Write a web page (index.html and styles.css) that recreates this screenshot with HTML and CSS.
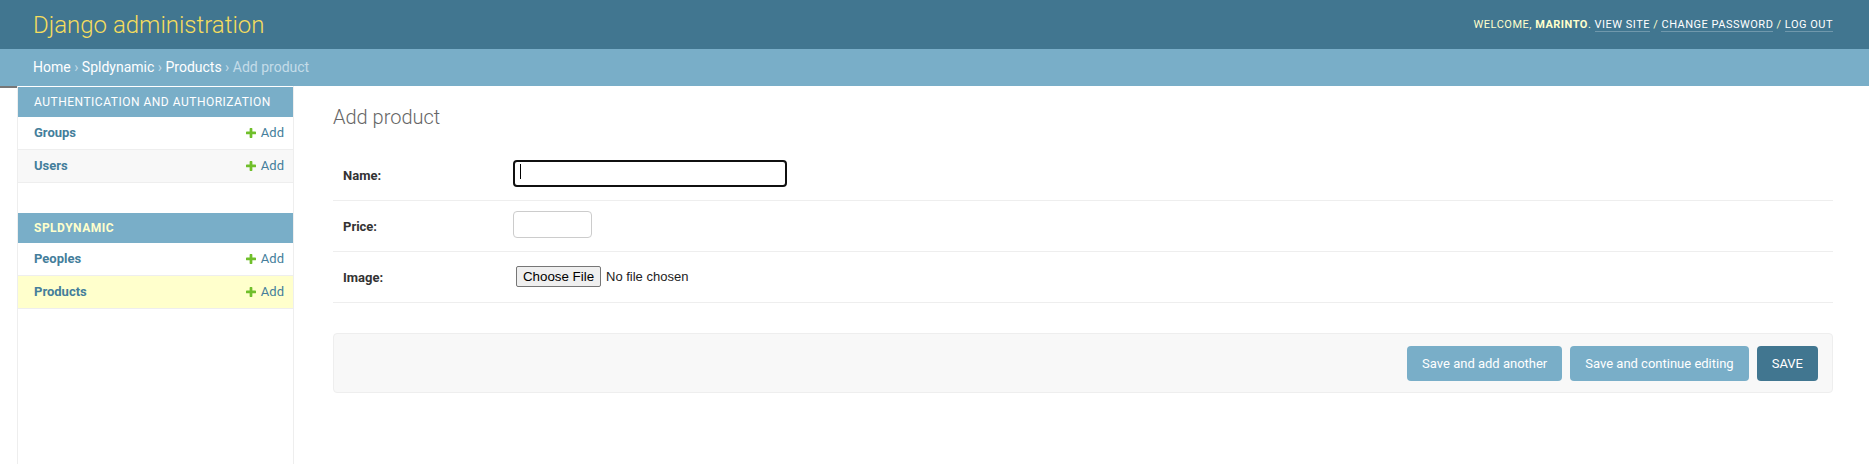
FILE: index.html
```html
<!DOCTYPE html>
<html lang="en">
<head>
<meta charset="utf-8">
<title>Add product | Django site admin</title>
<link rel="stylesheet" href="styles.css">
</head>
<body>
<header class="header">
  <div class="branding"><h1 class="site-name"><a href="#">Django administration</a></h1></div>
  <div class="user-tools">Welcome, <strong>marinto</strong>. <a href="#">View site</a> / <a href="#">Change password</a> / <a href="#">Log out</a></div>
</header>
<nav class="breadcrumbs"><a href="#">Home</a> › <a href="#">Spldynamic</a> › <a href="#">Products</a> › Add product</nav>
<div class="main">
  <button class="toggle-nav" type="button" aria-label="Toggle navigation"></button>
  <nav class="sidebar">
    <div class="module">
      <div class="caption">Authentication and Authorization</div>
      <div class="row"><a class="model" href="#">Groups</a><a class="addlink" href="#"><svg class="plus" viewBox="192 192 1408 1408" width="10" height="10"><path fill="#70bf2b" d="M1600 796v192q0 40-28 68t-68 28h-416v416q0 40-28 68t-68 28h-192q-40 0-68-28t-28-68v-416h-416q-40 0-68-28t-28-68v-192q0-40 28-68t68-28h416v-416q0-40 28-68t68-28h192q40 0 68 28t28 68v416h416q40 0 68 28t28 68z"/></svg>Add</a></div>
      <div class="row row-alt"><a class="model" href="#">Users</a><a class="addlink" href="#"><svg class="plus" viewBox="192 192 1408 1408" width="10" height="10"><path fill="#70bf2b" d="M1600 796v192q0 40-28 68t-68 28h-416v416q0 40-28 68t-68 28h-192q-40 0-68-28t-28-68v-416h-416q-40 0-68-28t-28-68v-192q0-40 28-68t68-28h416v-416q0-40 28-68t68-28h192q40 0 68 28t28 68v416h416q40 0 68 28t28 68z"/></svg>Add</a></div>
    </div>
    <div class="module current-app">
      <div class="caption">Spldynamic</div>
      <div class="row"><a class="model" href="#">Peoples</a><a class="addlink" href="#"><svg class="plus" viewBox="192 192 1408 1408" width="10" height="10"><path fill="#70bf2b" d="M1600 796v192q0 40-28 68t-68 28h-416v416q0 40-28 68t-68 28h-192q-40 0-68-28t-28-68v-416h-416q-40 0-68-28t-28-68v-192q0-40 28-68t68-28h416v-416q0-40 28-68t68-28h192q40 0 68 28t28 68v416h416q40 0 68 28t28 68z"/></svg>Add</a></div>
      <div class="row row-current"><a class="model" href="#">Products</a><a class="addlink" href="#"><svg class="plus" viewBox="192 192 1408 1408" width="10" height="10"><path fill="#70bf2b" d="M1600 796v192q0 40-28 68t-68 28h-416v416q0 40-28 68t-68 28h-192q-40 0-68-28t-28-68v-416h-416q-40 0-68-28t-28-68v-192q0-40 28-68t68-28h416v-416q0-40 28-68t68-28h192q40 0 68 28t28 68v416h416q40 0 68 28t28 68z"/></svg>Add</a></div>
    </div>
  </nav>
  <div class="content">
    <h1 class="page-title">Add product</h1>
    <form class="form">
      <fieldset class="fieldset">
        <div class="form-row">
          <label class="label" for="id_name">Name:</label>
          <span class="field field-caret"><input class="vTextField" id="id_name" type="text"></span>
        </div>
        <div class="form-row">
          <label class="label" for="id_price">Price:</label>
          <span class="field"><input class="vIntegerField" id="id_price" type="text"></span>
        </div>
        <div class="form-row">
          <label class="label" for="id_image">Image:</label>
          <span class="field"><input class="file-input" id="id_image" type="file"></span>
        </div>
      </fieldset>
      <div class="submit-row">
        <button class="btn" type="button">Save and add another</button>
        <button class="btn" type="button">Save and continue editing</button>
        <button class="btn btn-default" type="button">SAVE</button>
      </div>
    </form>
  </div>
</div>
</body>
</html>
```
FILE: styles.css
```css
html, body {
  margin: 0;
  padding: 0;
}
body {
  font-family: Roboto, "Liberation Sans", sans-serif;
  font-size: 14px;
  color: #333;
  background: #fff;
}
a {
  text-decoration: none;
}

/* Header */
.header {
  display: flex;
  justify-content: space-between;
  align-items: center;
  height: 49px;
  box-sizing: border-box;
  padding: 0 36px 0 33px;
  background: #417690;
  color: #ffc;
}
.site-name {
  margin: 0;
  font-size: 24px;
  font-weight: 300;
  line-height: 28px;
}
.site-name a {
  color: #f5dd5d;
}
.user-tools {
  font-size: 11px;
  line-height: 14px;
  letter-spacing: 0.5px;
  text-transform: uppercase;
  color: #ffc;
}
.user-tools strong {
  font-weight: bold;
}
.user-tools a {
  color: #fff;
  border-bottom: 1px solid rgba(255, 255, 255, 0.25);
}

/* Breadcrumbs */
.breadcrumbs {
  background: #79aec8;
  padding: 10px 33px;
  font-size: 14px;
  line-height: 17px;
  color: #c4dce8;
}
.breadcrumbs a {
  color: #fff;
}

/* Main */
.main {
  display: flex;
  min-height: calc(100vh - 86px);
}
.toggle-nav {
  flex: 0 0 17px;
  align-self: flex-start;
  height: 2px;
  margin: 0;
  padding: 0;
  border: 0;
  background: #777;
}
.sidebar {
  flex: 0 0 275px;
  border-left: 1px solid #eee;
  border-right: 1px solid #eee;
  padding-top: 1px;
}
.module {
  margin-bottom: 30px;
}
.caption {
  height: 30px;
  line-height: 30px;
  padding: 0 16px;
  background: #79aec8;
  color: #fff;
  font-size: 12px;
  letter-spacing: 0.5px;
  text-transform: uppercase;
}
.current-app .caption {
  color: #ffc;
  font-weight: bold;
}
.row {
  display: flex;
  justify-content: space-between;
  align-items: center;
  height: 31px;
  border-bottom: 1px solid #eee;
  padding: 0 9px 1px 16px;
  font-size: 13px;
}
.row-alt {
  background: #f8f8f8;
}
.row-current {
  background: #ffc;
}
.model {
  color: #447e9b;
  font-weight: bold;
}
.addlink {
  display: flex;
  align-items: center;
  gap: 5px;
  color: #447e9b;
}
.plus {
  display: block;
}

/* Content */
.content {
  flex: 1;
  padding: 20px 36px 20px 39px;
}
.page-title {
  margin: 0 0 21px;
  font-size: 20px;
  font-weight: 300;
  line-height: 23px;
  color: #666;
}
.fieldset {
  margin: 0;
  padding: 0;
  border: 0;
}
.form-row {
  display: flex;
  padding: 10px;
  border-bottom: 1px solid #eee;
  font-size: 13px;
}
.label {
  width: 160px;
  padding: 8px 10px 0 0;
  line-height: 16px;
  font-weight: bold;
  color: #333;
}
.field {
  display: block;
  position: relative;
  height: 30px;
}
.vTextField {
  display: block;
  width: 274px;
  height: 27px;
  box-sizing: border-box;
  margin: 0;
  padding: 5px 6px;
  border: 2px solid #101010;
  border-radius: 4px;
  outline: none;
  font: 13px Roboto, sans-serif;
}
.field-caret::after {
  content: "";
  position: absolute;
  left: 7px;
  top: 4px;
  width: 1px;
  height: 15px;
  background: #000;
}
.vIntegerField {
  display: block;
  width: 79px;
  height: 27px;
  box-sizing: border-box;
  margin: 0;
  padding: 5px 6px;
  border: 1px solid #ccc;
  border-radius: 4px;
  font: 13px Roboto, sans-serif;
}
.file-input {
  display: block;
  margin: 4px 0 0 3px;
  padding: 0;
  font: 13px "Liberation Sans", Arial, sans-serif;
  color: #222;
}
.file-input::file-selector-button {
  width: 85px;
  height: 21px;
  margin: 0 5px 0 0;
  padding: 0;
  border: 1px solid #767676;
  border-radius: 2px;
  background: #efefef;
  color: #000;
  font: 13.33px "Liberation Sans", Arial, sans-serif;
}

/* Submit row */
.submit-row {
  margin-top: 30px;
  display: flex;
  justify-content: flex-end;
  gap: 8px;
  padding: 12px 14px 11px;
  background: #f8f8f8;
  border: 1px solid #eee;
  border-radius: 4px;
}
.btn {
  height: 35px;
  margin: 0;
  padding: 0 15px;
  border: 0;
  border-radius: 4px;
  background: #79aec8;
  color: #fff;
  font: 13px Roboto, sans-serif;
}
.btn-default {
  background: #417690;
}
```
